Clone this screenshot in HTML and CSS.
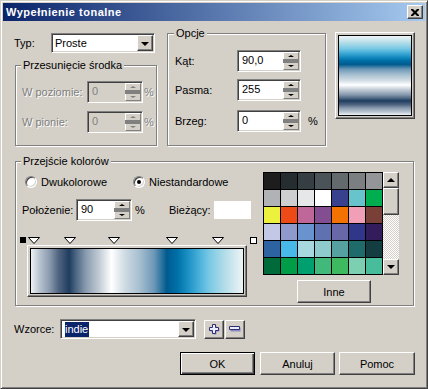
FILE: index.html
```html
<!DOCTYPE html>
<html lang="pl">
<head>
    <meta charset="UTF-8">
    <title>Wypełnienie tonalne</title>
    <link rel="stylesheet" href="styles.css">
</head>
<body>
    <div class="window">
        <div class="titlebar">
            <span class="title">Wypełnienie tonalne</span>
            <div class="close-btn raised">
                <svg width="8" height="7" viewBox="0 0 8 7"><path d="M0 0h2l2 2 2-2h2v1L5.5 3.5 8 6v1H6L4 5 2 7H0V6l2.5-2.5L0 1z" fill="#000"/></svg>
            </div>
        </div>

        <div class="content">
            <div class="top-row">
                <div class="left-col">
                    <div class="typ-row">
                        <span class="typ-label">Typ:</span>
                        <div class="combo typ-combo sunken">
                            <span class="combo-text">Proste</span>
                            <div class="drop-btn raised"><span class="arrow-down"></span></div>
                        </div>
                    </div>

                    <div class="group offset-group">
                        <span class="group-title">Przesunięcie środka</span>
                        <div class="row offset-row first">
                            <span class="label disabled-text">W poziomie:</span>
                            <div class="spin-edit sunken disabled">
                                <span class="value">0</span>
                                <div class="spin">
                                    <div class="spin-up"><span class="arrow-up small"></span></div>
                                    <div class="spin-bar"></div>
                                    <div class="spin-down"><span class="arrow-down small"></span></div>
                                </div>
                            </div>
                            <span class="unit disabled-text">%</span>
                        </div>
                        <div class="row offset-row second">
                            <span class="label disabled-text">W pionie:</span>
                            <div class="spin-edit sunken disabled">
                                <span class="value">0</span>
                                <div class="spin">
                                    <div class="spin-up"><span class="arrow-up small"></span></div>
                                    <div class="spin-bar"></div>
                                    <div class="spin-down"><span class="arrow-down small"></span></div>
                                </div>
                            </div>
                            <span class="unit disabled-text">%</span>
                        </div>
                    </div>
                </div>

                <div class="group options-group">
                    <span class="group-title">Opcje</span>
                    <div class="row opt-row r1">
                        <span class="label">Kąt:</span>
                        <div class="spin-edit sunken">
                            <span class="value">90,0</span>
                            <div class="spin">
                                <div class="spin-up"><span class="arrow-up small"></span></div>
                                <div class="spin-bar"></div>
                                <div class="spin-down"><span class="arrow-down small"></span></div>
                            </div>
                        </div>
                    </div>
                    <div class="row opt-row r2">
                        <span class="label">Pasma:</span>
                        <div class="spin-edit sunken">
                            <span class="value">255</span>
                            <div class="spin">
                                <div class="spin-up"><span class="arrow-up small"></span></div>
                                <div class="spin-bar"></div>
                                <div class="spin-down"><span class="arrow-down small"></span></div>
                            </div>
                        </div>
                    </div>
                    <div class="row opt-row r3">
                        <span class="label">Brzeg:</span>
                        <div class="spin-edit sunken">
                            <span class="value">0</span>
                            <div class="spin">
                                <div class="spin-up"><span class="arrow-up small"></span></div>
                                <div class="spin-bar"></div>
                                <div class="spin-down"><span class="arrow-down small"></span></div>
                            </div>
                        </div>
                        <span class="unit">%</span>
                    </div>
                </div>

                <div class="preview raised-frame">
                    <div class="preview-inner"></div>
                </div>
            </div>

            <div class="group blend-group">
                <span class="group-title">Przejście kolorów</span>
                <div class="blend-body">
                    <div class="blend-left">
                        <div class="radio-row">
                            <div class="radio-item first">
                                <span class="radio"></span>
                                <span class="radio-label">Dwukolorowe</span>
                            </div>
                            <div class="radio-item">
                                <span class="radio checked"><span class="dot"></span></span>
                                <span class="radio-label">Niestandardowe</span>
                            </div>
                        </div>

                        <div class="pos-row">
                            <span class="pos-label">Położenie:</span>
                            <div class="spin-edit sunken pos-edit">
                                <span class="value">90</span>
                                <div class="spin">
                                    <div class="spin-up"><span class="arrow-up small"></span></div>
                                    <div class="spin-bar"></div>
                                    <div class="spin-down"><span class="arrow-down small"></span></div>
                                </div>
                            </div>
                            <span class="pos-unit">%</span>
                            <span class="current-label">Bieżący:</span>
                            <div class="current-swatch"></div>
                        </div>

                        <div class="marker-strip">
                            <span class="marker-start"></span>
                            <svg class="marker" style="left: 12px" width="12" height="7" viewBox="0 0 12 7"><path d="M0.5 0.5H11.5L6 6.5Z" fill="#fff" stroke="#000"/></svg>
                            <svg class="marker" style="left: 48px" width="12" height="7" viewBox="0 0 12 7"><path d="M0.5 0.5H11.5L6 6.5Z" fill="#fff" stroke="#000"/></svg>
                            <svg class="marker" style="left: 92px" width="12" height="7" viewBox="0 0 12 7"><path d="M0.5 0.5H11.5L6 6.5Z" fill="#fff" stroke="#000"/></svg>
                            <svg class="marker" style="left: 150px" width="12" height="7" viewBox="0 0 12 7"><path d="M0.5 0.5H11.5L6 6.5Z" fill="#fff" stroke="#000"/></svg>
                            <svg class="marker" style="left: 196px" width="12" height="7" viewBox="0 0 12 7"><path d="M0.5 0.5H11.5L6 6.5Z" fill="#fff" stroke="#000"/></svg>
                            <span class="marker-end"></span>
                        </div>

                        <div class="blend-bar raised-frame">
                            <div class="blend-bar-inner"></div>
                        </div>
                    </div>

                    <div class="blend-right">
                        <div class="palette">
                            <div class="palette-grid">
                                <span style="background:#1d1d1d"></span><span style="background:#262d31"></span><span style="background:#353e42"></span><span style="background:#4a5357"></span><span style="background:#636a6d"></span><span style="background:#7b7f82"></span><span style="background:#939598"></span>
                                <span style="background:#b0b2b5"></span><span style="background:#cdced0"></span><span style="background:#e6e7e8"></span><span style="background:#ffffff"></span><span style="background:#37418e"></span><span style="background:#68c4cc"></span><span style="background:#00ae4f"></span>
                                <span style="background:#ecf13d"></span><span style="background:#ee4a17"></span><span style="background:#c0679a"></span><span style="background:#824d91"></span><span style="background:#f47300"></span><span style="background:#f09fb6"></span><span style="background:#794038"></span>
                                <span style="background:#c3c8e6"></span><span style="background:#8f99cc"></span><span style="background:#6993cf"></span><span style="background:#5f71b0"></span><span style="background:#6868a8"></span><span style="background:#30378b"></span><span style="background:#331c5b"></span>
                                <span style="background:#2c63a0"></span><span style="background:#47b8e7"></span><span style="background:#a7d8df"></span><span style="background:#8fcbcc"></span><span style="background:#57a0a1"></span><span style="background:#1f6b6b"></span><span style="background:#133d40"></span>
                                <span style="background:#006a3b"></span><span style="background:#009c48"></span><span style="background:#009f6f"></span><span style="background:#40b97a"></span><span style="background:#3fb95f"></span><span style="background:#7ccfb1"></span><span style="background:#47bd9b"></span>
                            </div>
                            <div class="scrollbar">
                                <div class="sb-btn raised"><span class="arrow-up"></span></div>
                                <div class="sb-thumb raised"></div>
                                <div class="sb-track"></div>
                                <div class="sb-btn raised"><span class="arrow-down"></span></div>
                            </div>
                        </div>
                        <div class="btn raised inne-btn">Inne</div>
                    </div>
                </div>
            </div>

            <div class="presets-row">
                <span class="presets-label">Wzorce:</span>
                <div class="combo presets-combo sunken">
                    <span class="combo-text"><span class="selected">indie</span></span>
                    <div class="drop-btn raised"><span class="arrow-down"></span></div>
                </div>
                <div class="icon-btn raised add-btn">
                    <svg width="11" height="11" viewBox="0 0 11 11">
                        <path d="M4.5 1.5h3v3h3v3h-3v3h-3v-3h-3v-3h3z" fill="#8a8ac4"/>
                        <path d="M3.5 0.5h3v3h3v3h-3v3h-3v-3h-3v-3h3z" fill="#ececff" stroke="#2e2e70"/>
                    </svg>
                </div>
                <div class="icon-btn raised remove-btn">
                    <svg width="12" height="6" viewBox="0 0 12 6">
                        <path d="M1.5 1.5h10v4h-10z" fill="#8a8ac4"/>
                        <path d="M0.5 0.5h10v3h-10z" fill="#ececff" stroke="#2e2e70"/>
                    </svg>
                </div>
            </div>

            <div class="buttons-row">
                <div class="btn default-btn">OK</div>
                <div class="btn raised cancel-btn">Anuluj</div>
                <div class="btn raised help-btn">Pomoc</div>
            </div>
        </div>
    </div>
</body>
</html>
```

FILE: styles.css
```css
* {
    box-sizing: border-box;
}

html, body {
    margin: 0;
    padding: 0;
}

body {
    width: 428px;
    height: 389px;
    overflow: hidden;
    background: #d4d0c8;
    font-family: 'Liberation Sans', Arial, sans-serif;
    font-size: 11px;
    color: #000;
}

/* classic 3D borders */
.raised {
    background: #d4d0c8;
    border: 1px solid;
    border-color: #fff #404040 #404040 #fff;
    box-shadow: inset -1px -1px #808080;
}

.sunken {
    border: 1px solid;
    border-color: #808080 #fff #fff #808080;
    box-shadow: inset 1px 1px #404040, inset -1px -1px #d4d0c8;
    padding: 1px;
}

.raised-frame {
    border: 1px solid;
    border-color: #fff #404040 #404040 #fff;
    box-shadow: inset -1px -1px #808080, inset 1px 1px #d4d0c8;
    padding: 2px;
}

.window {
    width: 428px;
    height: 389px;
    border: 1px solid;
    border-color: #d4d0c8 #404040 #404040 #d4d0c8;
    box-shadow: inset 1px 1px #fff, inset -1px -1px #808080;
    padding: 2px;
}

.titlebar {
    height: 18px;
    display: flex;
    align-items: center;
    padding: 0 2px;
    background: linear-gradient(90deg, #0a246a 0%, #a6caf0 100%);
}

.title {
    flex: 1;
    color: #fff;
    font-weight: bold;
    letter-spacing: 0.5px;
    padding-left: 1px;
}

.close-btn {
    width: 16px;
    height: 14px;
    display: flex;
    align-items: center;
    justify-content: center;
    padding-right: 1px;
}

.close-btn svg {
    display: block;
}

.content {
    padding-top: 11px;
}

/* arrows */
.arrow-down, .arrow-up {
    display: block;
    width: 0;
    height: 0;
    border-left: 4px solid transparent;
    border-right: 4px solid transparent;
}

.arrow-down {
    border-top: 4px solid #000;
}

.arrow-up {
    border-bottom: 4px solid #000;
}

.arrow-down.small, .arrow-up.small {
    border-left-width: 3px;
    border-right-width: 3px;
}

.arrow-down.small {
    border-top-width: 2px;
}

.arrow-up.small {
    border-bottom-width: 2px;
}

/* top part */
.top-row {
    display: flex;
    align-items: flex-start;
}

.left-col {
    width: 143px;
    margin-left: 11px;
}

.typ-row {
    display: flex;
    align-items: center;
    height: 20px;
    margin-top: 1px;
}

.typ-label {
    width: 37px;
}

.combo {
    display: flex;
    align-items: center;
    height: 20px;
    background: #fff;
}

.combo-text {
    flex: 1;
    padding-left: 2px;
}

.drop-btn {
    width: 16px;
    height: 16px;
    display: flex;
    align-items: center;
    justify-content: center;
    padding-top: 1px;
}

.typ-combo {
    width: 104px;
}

.group {
    border: 1px solid #808080;
    box-shadow: 1px 1px 0 #fff, inset 1px 1px 0 #fff;
}

.group-title {
    display: block;
    width: max-content;
    height: 13px;
    line-height: 13px;
    margin: -7px 0 0 5px;
    padding: 0 2px;
    background: #d4d0c8;
}

.row {
    display: flex;
    align-items: center;
    height: 22px;
}

.label {
    flex: none;
}

.disabled-text {
    color: #808080;
    text-shadow: 1px 1px 0 #fff;
}

.spin-edit {
    display: flex;
    height: 22px;
    background: #fff;
}

.spin-edit .value {
    flex: 1;
    line-height: 17px;
    padding-left: 3px;
}

.spin-edit.disabled {
    background: #d4d0c8;
}

.spin-edit.disabled .value {
    color: #808080;
}

.spin {
    width: 16px;
    display: flex;
    flex-direction: column;
    background: #d4d0c8;
}

.spin-up, .spin-down {
    height: 7px;
    display: flex;
    align-items: center;
    justify-content: center;
    border-left: 1px solid #fff;
    border-right: 1px solid #808080;
}

.spin-up {
    border-top: 1px solid #fff;
}

.spin-down {
    border-bottom: 1px solid #808080;
}

.spin-bar {
    height: 4px;
    background: #808080;
}

.spin-edit.disabled .arrow-up {
    border-bottom-color: #808080;
}

.spin-edit.disabled .arrow-down {
    border-top-color: #808080;
}

.offset-group {
    width: 142px;
    height: 81px;
    margin: 12px 0 0 1px;
}

.offset-row {
    margin-left: 6px;
}

.offset-row.first {
    margin-top: 9px;
}

.offset-row.second {
    margin-top: 8px;
}

.offset-row .label {
    width: 65px;
}

.offset-row .spin-edit {
    width: 56px;
}

.offset-row .unit {
    margin-left: 1px;
}

.options-group {
    width: 159px;
    height: 113px;
    margin: 1px 0 0 10px;
}

.options-group .group-title {
    margin-left: 6px;
}

.opt-row {
    margin-left: 7px;
}

.opt-row.r1 {
    margin-top: 10px;
}

.opt-row.r2 {
    margin-top: 7px;
}

.opt-row.r3 {
    margin-top: 9px;
}

.opt-row .label {
    width: 62px;
}

.opt-row .spin-edit {
    width: 64px;
}

.opt-row .unit {
    margin-left: 7px;
}

.preview {
    width: 80px;
    height: 87px;
    margin-left: 9px;
}

.preview-inner,
.blend-bar-inner {
    height: 100%;
    border: 1px solid #000;
}

.preview-inner {
    background: linear-gradient(to top, #eef2f5 0%, #b8c4d0 4%, #8898ac 9%, #506480 13%, #1f3d60 18%, #4a6480 21%, #8a9cb0 26%, #c0cad4 32%, #ffffff 38%, #d0dce4 44%, #a8c0d0 51%, #6e98b8 58%, #005b8e 64%, #0070a8 69%, #1a90c4 74%, #50b4dc 80%, #78c8e4 84%, #b0dce8 91%, #eef4f6 100%);
}

/* colour blend group */
.blend-group {
    width: 399px;
    height: 145px;
    margin: 15px 0 0 12px;
}

.blend-body {
    display: flex;
}

.blend-left {
    width: 247px;
}

.radio-row {
    display: flex;
    align-items: center;
    height: 12px;
    margin: 8px 0 0 9px;
}

.radio-item {
    display: flex;
    align-items: center;
}

.radio-item.first {
    width: 108px;
}

.radio {
    width: 12px;
    height: 12px;
    border-radius: 50%;
    background: #fff;
    border: 1px solid;
    border-color: #808080 #fff #fff #808080;
    box-shadow: inset 1px 1px #404040, inset -1px -1px #d4d0c8;
    display: flex;
    align-items: center;
    justify-content: center;
}

.radio .dot {
    width: 4px;
    height: 4px;
    border-radius: 50%;
    background: #000;
}

.radio-label {
    margin-left: 4px;
}

.pos-row {
    display: flex;
    align-items: center;
    height: 22px;
    margin: 11px 0 0 6px;
}

.pos-label {
    width: 54px;
}

.pos-edit {
    width: 56px;
}

.pos-unit {
    width: 37px;
    padding-left: 3px;
}

.current-label {
    width: 45px;
}

.current-swatch {
    width: 37px;
    height: 18px;
    background: #fff;
}

.marker-strip {
    position: relative;
    height: 7px;
    margin-top: 16px;
}

.marker {
    position: absolute;
    top: 0;
    display: block;
}

.marker-start {
    position: absolute;
    left: 4px;
    top: 0;
    width: 6px;
    height: 6px;
    background: #000;
}

.marker-end {
    position: absolute;
    left: 234px;
    top: 0;
    width: 7px;
    height: 7px;
    background: #fff;
    border: 1px solid #000;
}

.blend-bar {
    width: 220px;
    height: 52px;
    margin: 1px 0 0 11px;
}

.blend-bar-inner {
    background: linear-gradient(90deg, #eef2f5 0%, #b8c4d0 4%, #8898ac 9%, #506480 13%, #1f3d60 18%, #4a6480 21%, #8a9cb0 26%, #c0cad4 32%, #ffffff 38%, #d0dce4 44%, #a8c0d0 51%, #6e98b8 58%, #005b8e 64%, #0070a8 69%, #1a90c4 74%, #50b4dc 80%, #78c8e4 84%, #b0dce8 91%, #eef4f6 100%);
}

.blend-right {
    margin-top: 4px;
}

.palette {
    display: flex;
}

.palette-grid {
    display: grid;
    grid-template-columns: repeat(7, 16px);
    grid-auto-rows: 16px;
    gap: 1px;
    padding: 1px;
    background: #000;
}

.scrollbar {
    width: 16px;
    height: 103px;
    display: flex;
    flex-direction: column;
    background: repeating-conic-gradient(#d4d0c8 0 25%, #fff 0 50%) 0 0 / 2px 2px;
}

.sb-btn {
    height: 16px;
    display: flex;
    align-items: center;
    justify-content: center;
}

.sb-thumb {
    height: 27px;
}

.sb-track {
    flex: 1;
}

.btn {
    display: flex;
    align-items: center;
    justify-content: center;
    height: 23px;
}

.inne-btn {
    width: 74px;
    margin: 5px 0 0 34px;
}

/* bottom */
.presets-row {
    display: flex;
    align-items: center;
    height: 20px;
    margin: 13px 0 0 11px;
}

.presets-label {
    width: 46px;
}

.presets-combo {
    width: 136px;
}

.presets-combo .combo-text {
    padding-left: 3px;
}

.selected {
    background: #0a246a;
    color: #fff;
    padding: 1px 1px 2px 0;
}

.icon-btn {
    width: 20px;
    height: 19px;
    display: flex;
    align-items: center;
    justify-content: center;
}

.icon-btn svg {
    display: block;
}

.add-btn {
    margin-left: 8px;
}

.remove-btn {
    margin-left: 1px;
}

.buttons-row {
    display: flex;
    justify-content: flex-end;
    margin-top: 13px;
    padding-right: 10px;
}

.default-btn {
    width: 75px;
    background: #d4d0c8;
    border: 1px solid #000;
    box-shadow: inset 1px 1px #fff, inset -1px -1px #404040, inset -2px -2px #808080;
}

.cancel-btn {
    width: 75px;
    margin-left: 5px;
}

.help-btn {
    width: 76px;
    margin-left: 4px;
}
```
